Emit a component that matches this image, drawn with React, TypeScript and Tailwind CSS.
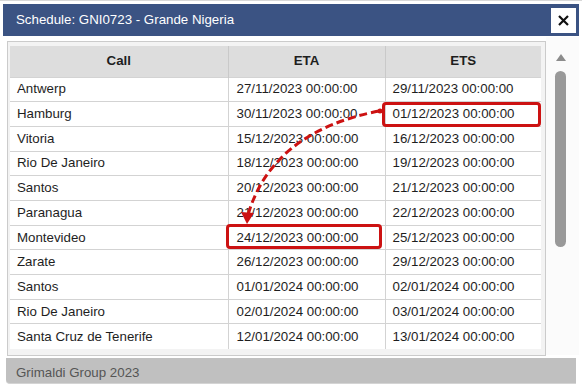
import React from 'react';

const rows = [
  ['Antwerp', '27/11/2023 00:00:00', '29/11/2023 00:00:00'],
  ['Hamburg', '30/11/2023 00:00:00', '01/12/2023 00:00:00'],
  ['Vitoria', '15/12/2023 00:00:00', '16/12/2023 00:00:00'],
  ['Rio De Janeiro', '18/12/2023 00:00:00', '19/12/2023 00:00:00'],
  ['Santos', '20/12/2023 00:00:00', '21/12/2023 00:00:00'],
  ['Paranagua', '21/12/2023 00:00:00', '22/12/2023 00:00:00'],
  ['Montevideo', '24/12/2023 00:00:00', '25/12/2023 00:00:00'],
  ['Zarate', '26/12/2023 00:00:00', '29/12/2023 00:00:00'],
  ['Santos', '01/01/2024 00:00:00', '02/01/2024 00:00:00'],
  ['Rio De Janeiro', '02/01/2024 00:00:00', '03/01/2024 00:00:00'],
  ['Santa Cruz de Tenerife', '12/01/2024 00:00:00', '13/01/2024 00:00:00'],
];

const App: React.FC = () => {
  return (
    <div className="relative w-[582px] h-[392px] overflow-hidden bg-white font-['Liberation_Sans',Arial,sans-serif] text-[13.3px] text-[#1e1e1e]">
      <div className="border-t border-[#d8d8d8] pt-[3px] px-[3px]">
        {/* title bar */}
        <div className="flex items-center justify-between h-[32px] bg-[#3b5383] pl-[13px] pr-[3px]">
          <span className="text-white text-[13.3px]">Schedule: GNI0723 - Grande Nigeria</span>
          <button className="flex items-center justify-center w-[25px] h-[25px] bg-white">
            <svg width="11" height="11" viewBox="0 0 11 11">
              <path d="M1 1 L10 10 M10 1 L1 10" stroke="#111" strokeWidth="2.2" />
            </svg>
          </button>
        </div>
      </div>

      {/* body */}
      <div className="flex pl-[7px] pt-[5px]">
        <div className="w-[539px] h-[315px] border border-[#cbcbcb] bg-[#f3f3f3] px-[2px] pt-[4px] overflow-hidden">
          <table className="w-[531px] border-collapse table-fixed bg-white">
            <colgroup>
              <col className="w-[218px]" />
              <col className="w-[157px]" />
              <col className="w-[156px]" />
            </colgroup>
            <thead>
              <tr className="h-[31px] bg-[#dddddd]">
                <th className="font-bold text-center">Call</th>
                <th className="font-bold text-center border-l border-[#c9c9c9]">ETA</th>
                <th className="font-bold text-center border-l border-[#c9c9c9]">ETS</th>
              </tr>
            </thead>
            <tbody>
              {rows.map((r, i) => (
                <tr key={i} className="h-[24.7px] border-t border-[#d3d3d3]">
                  <td className="pl-[7px] py-0 whitespace-nowrap">{r[0]}</td>
                  <td className="pl-[8px] py-0 border-l border-[#d3d3d3] whitespace-nowrap">{r[1]}</td>
                  <td className="pl-[7px] py-0 border-l border-[#d3d3d3] whitespace-nowrap">{r[2]}</td>
                </tr>
              ))}
            </tbody>
          </table>
        </div>

        {/* scrollbar */}
        <div className="w-[33px] h-[318px] bg-[#fbfbfb] flex flex-col items-center pt-[17px] -mt-[4px]">
          <svg width="10" height="7" viewBox="0 0 10 7" className="ml-[-4px]">
            <path d="M5 0 L10 7 L0 7 Z" fill="#8c8c8c" />
          </svg>
          <div className="mt-[10px] ml-[-4px] w-[11px] h-[176px] rounded-full bg-[#999999]" />
        </div>
      </div>

      {/* footer */}
      <div className="mx-[6px] mt-[2px] h-[26px] bg-[#c0c0c0] rounded-bl-[4px] border-b border-[#d4d4d4] flex items-center pt-[5px] pl-[10px] text-[#555]">
        Grimaldi Group 2023
      </div>

      {/* annotations */}
      <div className="absolute left-[382px] top-[102px] w-[159px] h-[25px] border-[3px] border-[#cc1212] rounded-[4px]" />
      <div className="absolute left-[226px] top-[224px] w-[156px] h-[25px] border-[3px] border-[#cc1212] rounded-[4px]" />
      <svg className="absolute left-0 top-0 pointer-events-none" width="582" height="392">
        <circle cx="380" cy="111" r="2.5" fill="#cc1212" />
        <path d="M379 111 Q 272 132 248 215" fill="none" stroke="#cc1212" strokeWidth="3" strokeDasharray="8 4" />
        <path d="M241 212 L247 224 L254 213 Z" fill="#cc1212" />
      </svg>
    </div>
  );
};

export default App;
